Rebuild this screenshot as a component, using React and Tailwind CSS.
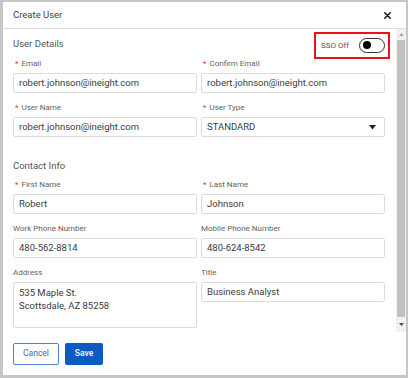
import React from "react";

const Label = ({ req, children }) => (
  <div className="h-[12px] leading-[12px] text-[8px] text-[#5f5f5f] mb-[3px] whitespace-nowrap">
    {req && <span className="text-[#e0352b] pl-[2px] pr-[3px]">*</span>}
    {children}
  </div>
);

const Input = ({ value }) => (
  <div className="h-[20px] border border-[#dcdcdc] rounded-[2px] flex items-center pl-[5px] text-[9.5px] text-[#3c3c3c] bg-white whitespace-nowrap">
    {value}
  </div>
);

const Field = ({ label, req, value }) => (
  <div>
    <Label req={req}>{label}</Label>
    <Input value={value} />
  </div>
);

export default function App() {
  return (
    <div
      className="w-[408px] h-[378px] bg-white border-l-[3px] border-r-2 border-t-2 border-b-[3px] border-[#c6c6c6] flex flex-col overflow-hidden"
      style={{ fontFamily: "Roboto, 'Liberation Sans', sans-serif" }}
    >
      {/* Header */}
      <div className="h-[27px] shrink-0 border-b border-[#dedede] flex items-center justify-between pl-[10px] pr-[15px]">
        <span className="text-[9.5px] text-[#444]">Create User</span>
        <svg width="7" height="7" viewBox="0 0 7 7">
          <path d="M0.8 0.8 L6.2 6.2 M6.2 0.8 L0.8 6.2" stroke="#222" strokeWidth="1.6" strokeLinecap="round" />
        </svg>
      </div>

      {/* Body */}
      <div className="h-[303px] shrink-0 flex overflow-hidden">
        <div className="flex-1 pl-[10px] pr-[11px] pt-[8px]">
          <div className="h-[14px] flex items-start justify-between">
            <span className="text-[9.5px] leading-[14px] text-[#555]">User Details</span>
            <div className="-mt-[5px] -mb-[13px] -mr-[5px] h-[27px] w-[76px] border-2 border-[#e8141c] flex items-center pl-[5px] pr-[3px] justify-between">
              <span className="text-[8px] text-[#555]">SSO Off</span>
              <div className="relative w-[26px] h-[15px] rounded-full border border-[#333] bg-white">
                <div className="absolute left-[3px] top-[1.5px] w-[8px] h-[8px] rounded-full bg-black" />
              </div>
            </div>
          </div>

          <div className="mt-[7px] grid grid-cols-2 gap-x-[4px] gap-y-[9px]">
            <Field req label="Email" value="robert.johnson@ineight.com" />
            <Field req label="Confirm Email" value="robert.johnson@ineight.com" />
            <Field req label="User Name" value="robert.johnson@ineight.com" />
            <div>
              <Label req>User Type</Label>
              <div className="h-[20px] border border-[#dcdcdc] rounded-[2px] flex items-center justify-between pl-[5px] pr-[8px] text-[9.5px] text-[#3c3c3c]">
                <span>STANDARD</span>
                <svg width="7" height="5" viewBox="0 0 7 5">
                  <path d="M0 0 L7 0 L3.5 4.5 Z" fill="#222" />
                </svg>
              </div>
            </div>
          </div>

          <div className="mt-[22px] text-[9.5px] leading-[14px] text-[#555]">Contact Info</div>

          <div className="mt-[6px] grid grid-cols-2 gap-x-[4px] gap-y-[9px]">
            <Field req label="First Name" value="Robert" />
            <Field req label="Last Name" value="Johnson" />
            <Field label="Work Phone Number" value="480-562-8814" />
            <Field label="Mobile Phone Number" value="480-624-8542" />
            <div>
              <Label>Address</Label>
              <div className="h-[46px] border border-[#dcdcdc] rounded-[2px] pl-[5px] pt-[3px] text-[9.5px] leading-[13px] text-[#3c3c3c]">
                <div>535 Maple St.</div>
                <div>Scottsdale, AZ 85258</div>
              </div>
            </div>
            <Field label="Title" value="Business Analyst" />
          </div>
        </div>

        {/* Scrollbar */}
        <div className="w-[10px] shrink-0 bg-[#f1f1f1] flex flex-col items-center">
          <div className="h-[11px] flex items-center justify-center">
            <svg width="5" height="3" viewBox="0 0 5 3">
              <path d="M0 3 L5 3 L2.5 0 Z" fill="#a3a3a3" />
            </svg>
          </div>
          <div className="w-[8px] h-[277px] bg-[#c1c1c1]" />
          <div className="h-[14px] flex items-center justify-center">
            <svg width="5" height="3" viewBox="0 0 5 3">
              <path d="M0 0 L5 0 L2.5 3 Z" fill="#505050" />
            </svg>
          </div>
        </div>
      </div>

      {/* Footer */}
      <div className="flex-1 flex items-center pl-[10px] gap-[6px]">
        <button className="w-[46px] h-[22px] border border-[#4a86d6] rounded-[2px] text-[8.5px] text-[#2f6fc7] bg-white">
          Cancel
        </button>
        <button className="w-[38px] h-[22px] rounded-[2px] text-[8.5px] font-medium text-white bg-[#0b5bc4]">
          Save
        </button>
      </div>
    </div>
  );
}
